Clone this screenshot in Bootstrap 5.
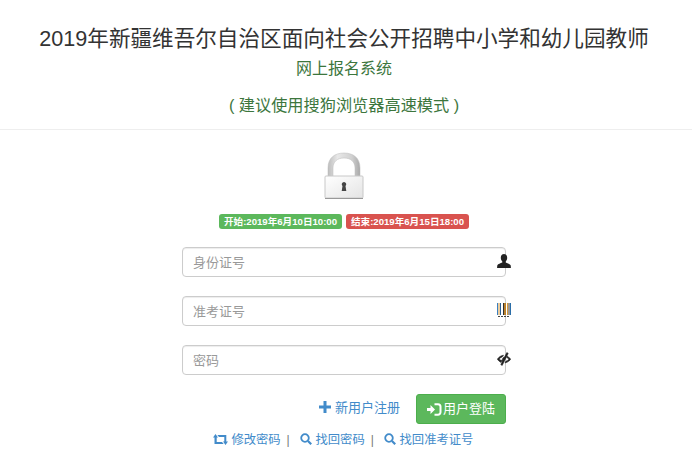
<!DOCTYPE html>
<html lang="zh-CN">
<head>
  <meta charset="UTF-8" />
  <meta name="viewport" content="width=device-width, initial-scale=1" />
  <title>网上报名系统</title>
  <link href="https://cdn.jsdelivr.net/npm/bootstrap@5.3.0/dist/css/bootstrap.min.css" rel="stylesheet" />
  <style>
    body { font-family: "Liberation Sans", "Noto Sans CJK SC", sans-serif; color: #333; font-size: 13px; height: 472px; overflow: hidden; }
    .page-head { height: 130px; padding: 25px 4px 0 0; border-bottom: 1px solid #eee; }
    .page-title { font-size: 21.6px; line-height: 27px; font-weight: 400; margin: 0; }
    .page-sub { font-size: 16px; line-height: 20px; color: #3c763d; margin: 7px 0 0; }
    .page-hint { font-size: 16.2px; line-height: 22px; color: #3c763d; margin: 15px 0 0; }
    .login-area { width: 324px; margin: 22px 0 0 182px; }
    .lock-img { display: block; margin: 0 auto; width: 40px; height: 48px; }
    .date-row { margin: 14px 0 18px 37px; gap: 4px; }
    .date-tag { background: #5cb85c; color: #fff; font-size: 9.6px; font-weight: 700; line-height: 15px; height: 15px; width: 123px; border-radius: 3px; text-align: center; }
    .date-tag.tag-end { background: #d9534f; }
    .field-wrap { position: relative; margin-bottom: 19px; }
    .field-wrap .form-control { height: 30px; font-size: 13px; padding: 5px 10px; border-color: #ccc; border-radius: 4px; box-shadow: inset 0 1px 1px rgba(0,0,0,.075); }
    .field-wrap .form-control::placeholder { color: #999; }
    .field-icon { position: absolute; left: 315px; top: 7px; width: 14px; height: 14px; }
    .action-row { margin-top: 17px; gap: 16px; }
    .action-row .link-blue { font-size: 13px; margin-bottom: 2px; }
    .link-blue { color: #428bca; text-decoration: none; font-size: 12.3px; }
    .link-blue svg { vertical-align: -1px; }
    .btn-enter { background: #5cb85c; border: 1px solid #4cae4c; color: #fff; width: 90px; height: 30px; padding: 0; font-size: 13px; border-radius: 3px; gap: 1px; }
    .btn-enter:hover { background: #449d44; color: #fff; }
    .link-row { margin: 8px 0 0 31px; font-size: 12px; color: #777; white-space: nowrap; line-height: 17px; }
    .link-row .sep { margin: 0 7px 0 6px; }
  </style>
</head>
<body>
  <header class="page-head text-center">
    <h1 class="page-title">2019年新疆维吾尔自治区面向社会公开招聘中小学和幼儿园教师</h1>
    <p class="page-sub">网上报名系统</p>
    <p class="page-hint">( 建议使用搜狗浏览器高速模式 )</p>
  </header>

  <main class="login-area">
    <!-- lock -->
    <svg class="lock-img" viewBox="0 0 40 48">
      <defs>
        <linearGradient id="shackle" x1="0" x2="1" y1="0" y2="0">
          <stop offset="0" stop-color="#bdbdbd" /><stop offset=".3" stop-color="#e8e8e8" /><stop offset=".75" stop-color="#d0d0d0" /><stop offset="1" stop-color="#a9a9a9" />
        </linearGradient>
        <linearGradient id="lockbody" x1="0" x2="1" y1="0" y2="1">
          <stop offset="0" stop-color="#ffffff" /><stop offset="1" stop-color="#e4e4e4" />
        </linearGradient>
      </defs>
      <path d="M4 26V16C4 6 10.500 1 20 1s16 5 16 15v10h-5V16c0-6-4-10-11-10S9 10 9 16v10z" fill="url(#shackle)" stroke="#bbb" stroke-width=".5" />
      <rect x="1" y="24" width="38" height="22" rx="1" fill="url(#lockbody)" stroke="#c8c8c8" />
      <path d="M1 46.500h38" stroke="#999" stroke-width="1.200" />
      <path d="M20 30a2.300 2.300 0 0 1 1.500 4l.8 5h-4.600l.8-5a2.300 2.300 0 0 1 1.500-4z" fill="#444" />
    </svg>

    <div class="date-row d-flex">
      <div class="date-tag flex-shrink-0">开始:2019年6月10日10:00</div>
      <div class="date-tag tag-end flex-shrink-0">结束:2019年6月15日18:00</div>
    </div>

    <div class="field-wrap">
      <input class="form-control" type="text" placeholder="身份证号" />
      <svg class="field-icon" viewBox="0 0 14 14"><path d="M7 0c2 0 3.200 1.500 3.200 3.700 0 1.600-.8 3-1.500 3.700v1.100c1.800.7 4.300 1.600 4.800 2.500.3.700.4 2 .4 3H.1c0-1 .1-2.300.4-3 .5-.9 3-1.800 4.800-2.500V7.400C4.600 6.700 3.800 5.300 3.800 3.700 3.800 1.500 5 0 7 0z" fill="#222" /></svg>
    </div>
    <div class="field-wrap">
      <input class="form-control" type="text" placeholder="准考证号" />
      <svg class="field-icon" viewBox="0 0 14 14">
        <path d="M.5 0v12" stroke="#3a7fc0" /><path d="M2 0v12" stroke="#d89a3c" /><path d="M3.500 0v12" stroke="#2b5f94" /><path d="M6.500 0v12" stroke="#333" stroke-width="1" /><path d="M8 0v12" stroke="#b9802c" stroke-width="2" /><path d="M10.500 0v12" stroke="#d89a3c" stroke-width="1" /><path d="M12 0v12" stroke="#333" /><path d="M13.500 0v12" stroke="#2b6ea8" />
        <path d="M1 13.500h12" stroke="#444" stroke-dasharray="2 1" />
      </svg>
    </div>
    <div class="field-wrap">
      <input class="form-control" type="text" placeholder="密码" />
      <svg class="field-icon" viewBox="0 0 14 14">
        <g fill="#222" stroke="#222" stroke-width=".6">
          <path d="M6.500 3.200C4 3.500 1.800 5 .3 7.200c1 1.400 2.200 2.500 3.700 3.200l1-1.800C3.700 8.200 2.700 7.700 2 7.200 3 6 4.200 5.200 5.500 4.800z" />
          <path d="M9.800.6 11.200 1.400 5.200 13.400 3.800 12.600z" />
          <path d="M6.800 5.200 8 5.400 5.800 9.500C5 8.800 4.800 6.600 6.800 5.200z" />
          <path d="M10 4.200c1.600.7 2.800 1.700 3.700 3-1.400 2-3.400 3.300-5.700 3.700l.9-1.700c1.400-.4 2.400-1.100 3.100-2-.6-.7-1.300-1.200-2.200-1.600z" />
        </g>
      </svg>
    </div>

    <div class="action-row d-flex justify-content-end align-items-center">
      <a class="link-blue" href="#"><svg width="12" height="12" viewBox="0 0 12 12"><path d="M4.500 0h3v4.500H12v3H7.500V12h-3V7.500H0v-3h4.500z" fill="#428bca" /></svg> 新用户注册</a>
      <button class="btn btn-enter d-flex align-items-center justify-content-center" type="button">
        <svg width="15" height="13" viewBox="0 0 15 13"><path d="M0 5h3.500V2l4.500 4.500L3.500 11V8H0z" fill="#fff" /><path d="M7.500 1.200h3.500a2.500 2.500 0 0 1 2.500 2.500v5.600a2.500 2.500 0 0 1-2.500 2.500H7.500" fill="none" stroke="#fff" stroke-width="2" /></svg>用户登陆
      </button>
    </div>

    <div class="link-row">
      <a class="link-blue" href="#"><svg width="15" height="11" viewBox="0 0 15 11"><path d="M2.500 0 5 3.500H3.700V8H9l1.700 2H1.500V3.500H0z" fill="#428bca" /><path d="M12.500 11 10 7.500h1.300V3H6L4.300 1h9v6.500H15z" fill="#428bca" /></svg> 修改密码</a><span class="sep">|</span>
      <a class="link-blue" href="#"><svg width="12" height="12" viewBox="0 0 12 12"><circle cx="5" cy="5" r="3.800" fill="none" stroke="#428bca" stroke-width="1.800" /><path d="M8 8l3.200 3.200" stroke="#428bca" stroke-width="2.200" /></svg> 找回密码</a><span class="sep">|</span>
      <a class="link-blue" href="#"><svg width="12" height="12" viewBox="0 0 12 12"><circle cx="5" cy="5" r="3.800" fill="none" stroke="#428bca" stroke-width="1.800" /><path d="M8 8l3.200 3.200" stroke="#428bca" stroke-width="2.200" /></svg> 找回准考证号</a>
    </div>
  </main>

  <script src="https://cdn.jsdelivr.net/npm/bootstrap@5.3.0/dist/js/bootstrap.bundle.min.js"></script>
</body>
</html>
